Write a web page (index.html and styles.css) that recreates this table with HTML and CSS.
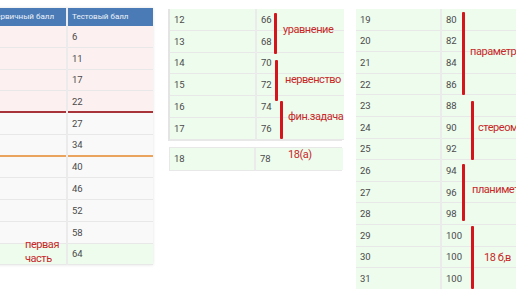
FILE: index.html
```html
<!DOCTYPE html>
<html>
<head>
<meta charset="utf-8">
<link rel="stylesheet" href="styles.css">
</head>
<body>
<div class="page">
  <div class="left">
    <div class="tbl t-left">
      <div class="hd hd1">Первичный балл</div><div class="hd">Тестовый балл</div>
      <div class="c pink"></div><div class="c pink">6</div>
      <div class="c pink"></div><div class="c pink">11</div>
      <div class="c pink"></div><div class="c pink">17</div>
      <div class="c pink b-red"></div><div class="c pink b-red">22</div>
      <div class="c gray"></div><div class="c gray">27</div>
      <div class="c gray b-orange"></div><div class="c gray b-orange">34</div>
      <div class="c gray"></div><div class="c gray">40</div>
      <div class="c gray"></div><div class="c gray">46</div>
      <div class="c gray"></div><div class="c gray">52</div>
      <div class="c gray"></div><div class="c gray">58</div>
      <div class="c green"></div><div class="c green">64</div>
    </div>
  </div>
  <div class="mid">
    <div class="tbl t-mid">
      <div class="c green">12</div><div class="c green">66</div>
      <div class="c green">13</div><div class="c green">68</div>
      <div class="c green">14</div><div class="c green">70</div>
      <div class="c green">15</div><div class="c green">72</div>
      <div class="c green">16</div><div class="c green">74</div>
      <div class="c green">17</div><div class="c green">76</div>
    </div>
    <div class="tbl t-mid2">
      <div class="c green">18</div><div class="c green">78</div>
    </div>
  </div>
  <div class="right">
    <div class="tbl t-right">
      <div class="c green">19</div><div class="c green">80</div>
      <div class="c green">20</div><div class="c green">82</div>
      <div class="c green">21</div><div class="c green">84</div>
      <div class="c green">22</div><div class="c green">86</div>
      <div class="c green">23</div><div class="c green">88</div>
      <div class="c green">24</div><div class="c green">90</div>
      <div class="c green">25</div><div class="c green">92</div>
      <div class="c green">26</div><div class="c green">94</div>
      <div class="c green">27</div><div class="c green">96</div>
      <div class="c green">28</div><div class="c green">98</div>
      <div class="c green">29</div><div class="c green">100</div>
      <div class="c green">30</div><div class="c green">100</div>
      <div class="c green">31</div><div class="c green">100</div>
    </div>
  </div>

  <div class="note n1">первая<br>часть</div>

  <div class="bar b1"></div><div class="note n2">уравнение</div>
  <div class="bar b2"></div><div class="note n3">нервенство</div>
  <div class="bar b3"></div><div class="note n4">фин.задача</div>
  <div class="note n5">18(а)</div>

  <div class="bar b4"></div><div class="note n6">параметр</div>
  <div class="bar b5"></div><div class="note n7">стереометрия</div>
  <div class="bar b6"></div><div class="note n8">планиметрия</div>
  <div class="bar b7"></div><div class="note n9">18 б,в</div>
</div>
</body>
</html>
```
FILE: styles.css
```css
html, body {
  margin: 0;
  padding: 0;
  background: #fff;
  overflow: hidden;
}
body {
  width: 516px;
  height: 289px;
  font-family: Roboto, "Noto Sans", sans-serif;
}
.page {
  position: relative;
  width: 516px;
  height: 289px;
  display: flex;
  align-items: flex-start;
  overflow: hidden;
}
.left {
  margin-left: -40px;
  padding-top: 8px;
  width: 193px;
  flex: none;
}
.tbl {
  display: grid;
  column-gap: 2px;
  background: #ebebeb;
}
.t-left {
  grid-template-columns: 106px 85px;
  grid-template-rows: 18px repeat(11, 21.75px);
  box-shadow: 0 0 3px rgba(0,0,0,0.12);
}
.hd {
  background: #4a7bb6;
  color: #eef3fa;
  font-size: 8px;
  line-height: 18px;
  padding-left: 4px;
  white-space: nowrap;
}
.hd1 {
  padding-left: 0;
  text-align: right;
  padding-right: 12px;
}
.c {
  font-size: 9.5px;
  color: #4a4a4a;
  padding-left: 4px;
  display: flex;
  align-items: center;
  border-bottom: 1px solid #e8e8e8;
  box-sizing: border-box;
}
.pink { background: #fdf0f0; }
.gray { background: #f9f9f9; }
.green { background: #eefcee; }
.b-red { border-bottom: 2px solid #a8343a; }
.b-orange { border-bottom: 2px solid #eba45d; }

.mid {
  margin-left: 15px;
  padding-top: 9px;
  width: 174px;
  flex: none;
}
.t-mid {
  grid-template-columns: 85px 87px;
  grid-auto-rows: 21.8px;
  border-left: 2px solid #e4e4e4;
  border-bottom: 1px solid #e8e8e8;
}
.t-mid2 {
  margin-top: 6px;
  margin-left: 1px;
  grid-template-columns: 84px 87px;
  grid-auto-rows: 22px;
  border: 1px solid #e8e8e8;
}
.t-mid2 .c { border-bottom: none; }

.right {
  margin-left: 14px;
  padding-top: 9px;
  width: 170px;
  flex: none;
}
.t-right {
  grid-template-columns: 84px 90px;
  grid-auto-rows: 21.6px;
}

.note {
  position: absolute;
  color: #c62828;
  font-family: Roboto, "Noto Sans", sans-serif;
  font-size: 11px;
  letter-spacing: -0.45px;
  line-height: 14px;
  white-space: nowrap;
}
.bar {
  position: absolute;
  width: 3px;
  background: #d4161c;
  border-radius: 1px;
}
.n1 { left: 25px; top: 238px; line-height: 14px; }
.b1 { left: 274px; top: 13px; height: 41px; }
.n2 { left: 283px; top: 23px; }
.b2 { left: 275px; top: 60px; height: 41px; }
.n3 { left: 285px; top: 73px; }
.b3 { left: 280px; top: 101px; height: 38px; }
.n4 { left: 288px; top: 110px; }
.n5 { left: 288px; top: 148px; }
.b4 { left: 462px; top: 12px; height: 83px; }
.n6 { left: 470px; top: 45px; }
.b5 { left: 471px; top: 101px; height: 59px; }
.n7 { left: 478px; top: 121px; }
.b6 { left: 462px; top: 164px; height: 57px; }
.n8 { left: 472px; top: 183px; }
.b7 { left: 471px; top: 226px; height: 63px; }
.n9 { left: 484px; top: 251px; }
```
